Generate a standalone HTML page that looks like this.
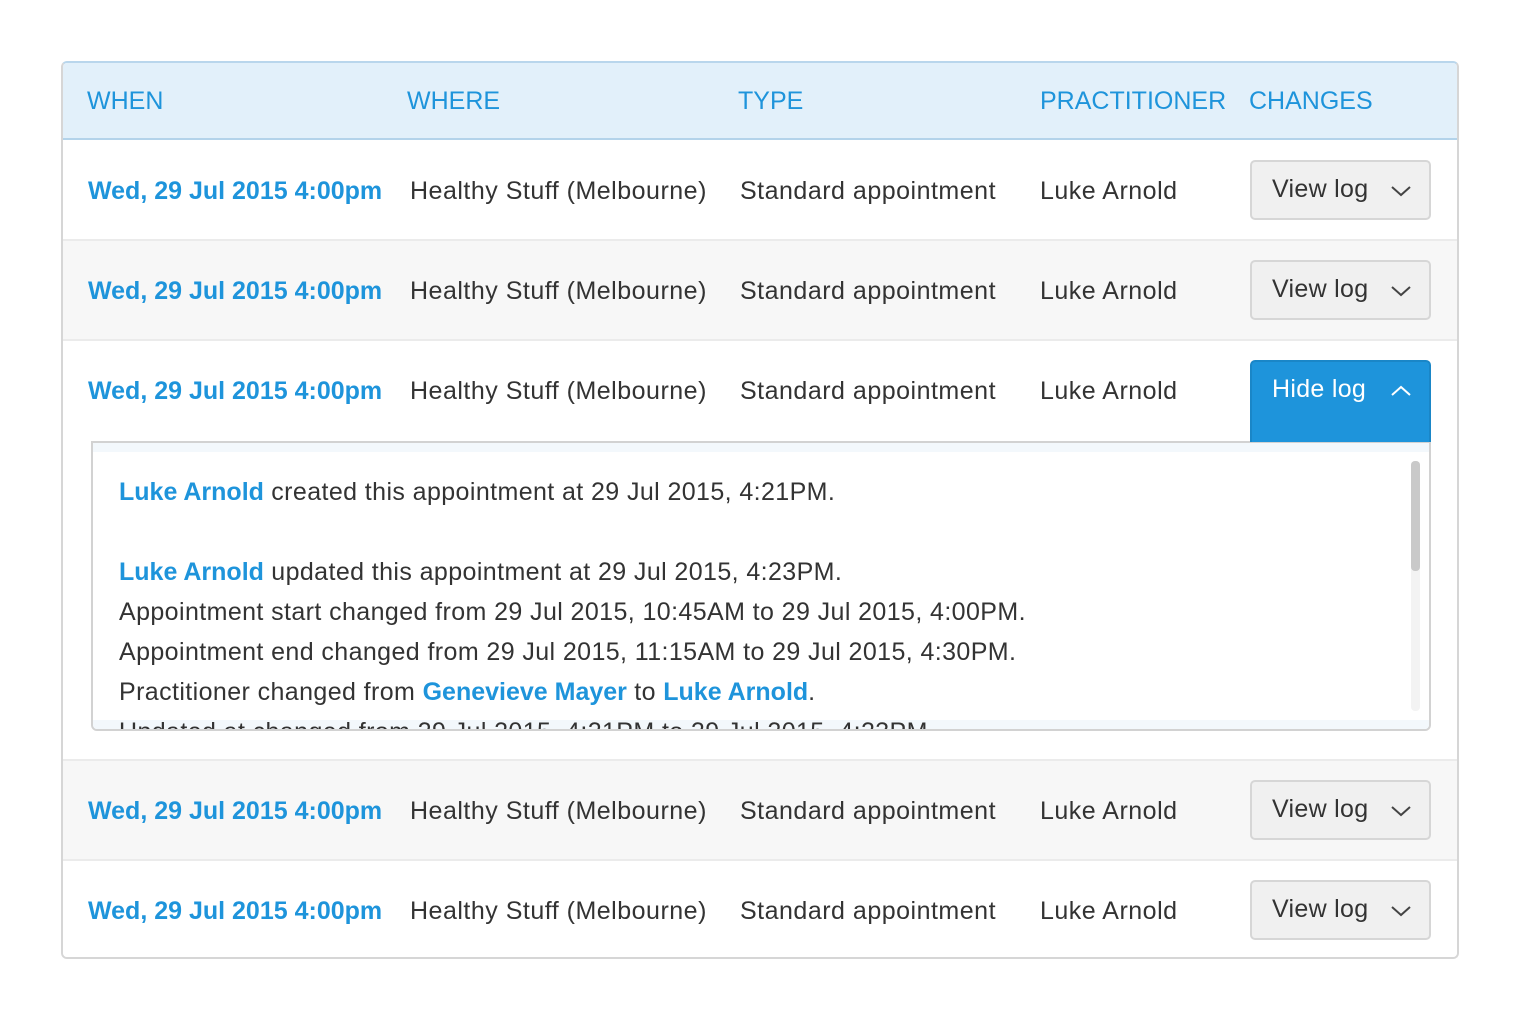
<!DOCTYPE html>
<html><head><meta charset="utf-8"><style>
*{margin:0;padding:0;box-sizing:border-box}
body{width:1520px;height:1020px;background:#fff;font-family:"Liberation Sans",sans-serif;color:#333;position:relative;overflow:hidden}
.box{position:absolute;left:61px;top:61px;width:1398px;height:898px;border:2px solid #d6d6d6;border-top-color:#b9d6ec;border-radius:6px;overflow:hidden}
.in{position:absolute;left:-1px;top:-1px;width:1398px;height:898px}
.hdr{position:absolute;left:0;top:0;width:100%;height:78px;background:#e2f0fa;border-bottom:2px solid #b3d3ea}
.t{position:absolute;white-space:nowrap;font-size:25px;line-height:30px;letter-spacing:0.5px}
.h{color:#1e94db;font-size:25px;letter-spacing:0}
.d{color:#1e94db;font-weight:bold;letter-spacing:0}
.row{position:absolute;left:0;width:100%;border-top:2px solid #ebebeb}
.btn{position:absolute;left:1188px;width:181px;height:60px;background:#f0f0f0;border:2px solid #d6d6d6;border-radius:5px;font-size:25px;color:#333;letter-spacing:0.3px}
.btn span{position:absolute;left:20px;top:13px}
.btn svg{position:absolute;left:138px;top:22px}
.hide{background:#1e94db;border-color:#1a86c7;color:#fff;height:82px;border-radius:5px 5px 0 0;border-bottom:none}
.log{position:absolute;left:29px;top:379px;width:1340px;height:290px;border:2px solid #d2d2d2;border-radius:0 0 6px 6px;overflow:hidden;background:#fff}
.log .l{position:absolute;left:26px;white-space:nowrap;font-size:25px;line-height:30px;letter-spacing:0.4px}
.b{color:#1e94db;font-weight:bold;letter-spacing:0}
</style></head><body>
<div class="box"><div class="in">
<div class="hdr">
<div class="t h" style="left:25px;top:24px">WHEN</div>
<div class="t h" style="left:345px;top:24px">WHERE</div>
<div class="t h" style="left:676px;top:24px">TYPE</div>
<div class="t h" style="left:978px;top:24px">PRACTITIONER</div>
<div class="t h" style="left:1187px;top:24px">CHANGES</div>
</div>

<div class="row" style="top:78px;height:100px;background:#fff;border-top:none"></div>
<div class="row" style="top:177px;height:101px;background:#f7f7f7"></div>
<div class="row" style="top:277px;height:421px;background:#fff"></div>
<div class="row" style="top:697px;height:101px;background:#f7f7f7"></div>
<div class="row" style="top:797px;height:103px;background:#fff"></div>

<div class="t d" style="left:26px;top:114px">Wed, 29 Jul 2015 4:00pm</div>
<div class="t" style="left:348px;top:114px">Healthy Stuff (Melbourne)</div>
<div class="t" style="left:678px;top:114px">Standard appointment</div>
<div class="t" style="left:978px;top:114px">Luke Arnold</div>
<div class="btn" style="top:98px"><span>View log</span><svg width="22" height="14"><path d="M2 3 L11 11 L20 3" fill="none" stroke="#444" stroke-width="2"/></svg></div>

<div class="t d" style="left:26px;top:214px">Wed, 29 Jul 2015 4:00pm</div>
<div class="t" style="left:348px;top:214px">Healthy Stuff (Melbourne)</div>
<div class="t" style="left:678px;top:214px">Standard appointment</div>
<div class="t" style="left:978px;top:214px">Luke Arnold</div>
<div class="btn" style="top:198px"><span>View log</span><svg width="22" height="14"><path d="M2 3 L11 11 L20 3" fill="none" stroke="#444" stroke-width="2"/></svg></div>

<div class="t d" style="left:26px;top:314px">Wed, 29 Jul 2015 4:00pm</div>
<div class="t" style="left:348px;top:314px">Healthy Stuff (Melbourne)</div>
<div class="t" style="left:678px;top:314px">Standard appointment</div>
<div class="t" style="left:978px;top:314px">Luke Arnold</div>

<div class="log">
<div style="position:absolute;left:0;top:0;width:100%;height:9px;background:#f3f8fc"></div>
<div style="position:absolute;left:0;bottom:0;width:100%;height:9px;background:#f3f8fc"></div>
<div style="position:absolute;left:1318px;top:18px;width:9px;height:250px;background:#f3f3f3;border-radius:4px"></div>
<div style="position:absolute;left:1318px;top:18px;width:9px;height:110px;background:#c9c9c9;border-radius:4px"></div>
<div class="l" style="top:34px"><span class="b">Luke Arnold</span> created this appointment at 29 Jul 2015, 4:21PM.</div>
<div class="l" style="top:114px"><span class="b">Luke Arnold</span> updated this appointment at 29 Jul 2015, 4:23PM.</div>
<div class="l" style="top:154px">Appointment start changed from 29 Jul 2015, 10:45AM to 29 Jul 2015, 4:00PM.</div>
<div class="l" style="top:194px">Appointment end changed from 29 Jul 2015, 11:15AM to 29 Jul 2015, 4:30PM.</div>
<div class="l" style="top:234px">Practitioner changed from <span class="b">Genevieve Mayer</span> to <span class="b">Luke Arnold</span>.</div>
<div class="l" style="top:274px">Updated at changed from 29 Jul 2015, 4:21PM to 29 Jul 2015, 4:23PM.</div>
</div>
<div class="btn hide" style="top:298px"><span>Hide log</span><svg width="22" height="14"><path d="M2 11 L11 3 L20 11" fill="none" stroke="#fff" stroke-width="2"/></svg></div>

<div class="t d" style="left:26px;top:734px">Wed, 29 Jul 2015 4:00pm</div>
<div class="t" style="left:348px;top:734px">Healthy Stuff (Melbourne)</div>
<div class="t" style="left:678px;top:734px">Standard appointment</div>
<div class="t" style="left:978px;top:734px">Luke Arnold</div>
<div class="btn" style="top:718px"><span>View log</span><svg width="22" height="14"><path d="M2 3 L11 11 L20 3" fill="none" stroke="#444" stroke-width="2"/></svg></div>

<div class="t d" style="left:26px;top:834px">Wed, 29 Jul 2015 4:00pm</div>
<div class="t" style="left:348px;top:834px">Healthy Stuff (Melbourne)</div>
<div class="t" style="left:678px;top:834px">Standard appointment</div>
<div class="t" style="left:978px;top:834px">Luke Arnold</div>
<div class="btn" style="top:818px"><span>View log</span><svg width="22" height="14"><path d="M2 3 L11 11 L20 3" fill="none" stroke="#444" stroke-width="2"/></svg></div>
</div></div>
</body></html>
